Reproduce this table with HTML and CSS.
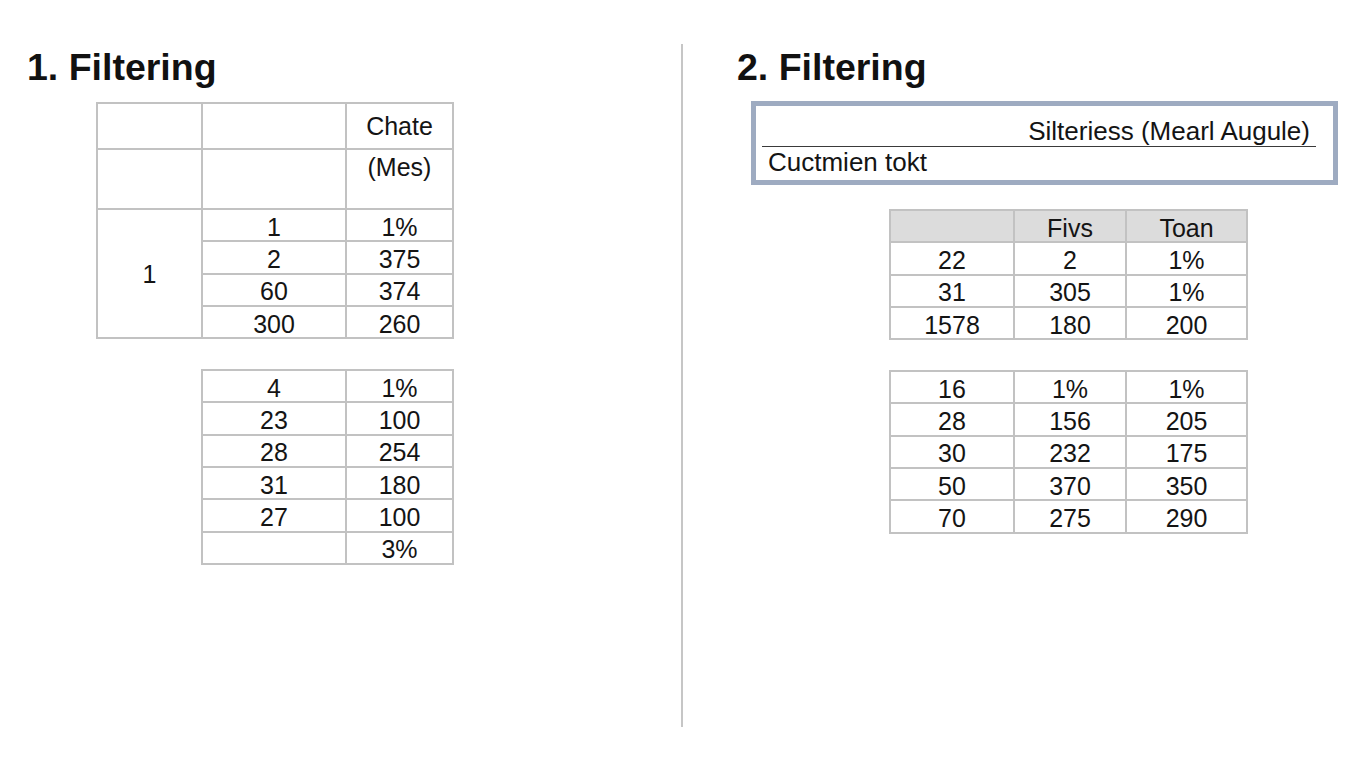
FILE: index.html
```html
<!DOCTYPE html>
<html lang="en">
<head>
<meta charset="utf-8">
<title>Filtering</title>
<link rel="stylesheet" href="styles.css">
</head>
<body>
<div class="page">
  <section class="panel panel-left">
    <h1 class="title">1. Filtering</h1>
    <table class="grid grid-a">
      <colgroup><col class="w105"><col class="w144"><col class="w107"></colgroup>
      <tr class="h46"><td></td><td></td><td>Chate</td></tr>
      <tr class="h60"><td></td><td></td><td class="top">(Mes)</td></tr>
      <tr><td class="span" rowspan="4">1</td><td>1</td><td>1%</td></tr>
      <tr><td>2</td><td>375</td></tr>
      <tr><td>60</td><td>374</td></tr>
      <tr><td>300</td><td>260</td></tr>
    </table>
    <table class="grid grid-b">
      <colgroup><col class="w144"><col class="w107"></colgroup>
      <tr><td>4</td><td>1%</td></tr>
      <tr><td>23</td><td>100</td></tr>
      <tr><td>28</td><td>254</td></tr>
      <tr><td>31</td><td>180</td></tr>
      <tr><td>27</td><td>100</td></tr>
      <tr><td></td><td>3%</td></tr>
    </table>
  </section>
  <div class="divider"></div>
  <section class="panel panel-right">
    <h1 class="title">2. Filtering</h1>
    <div class="filter-box">
      <div class="filter-head">Silteriess (Mearl Augule)</div>
      <div class="filter-text">Cuctmien tokt</div>
    </div>
    <table class="grid grid-c">
      <colgroup><col class="w124"><col class="w112"><col class="w121"></colgroup>
      <tr class="head"><td></td><td>Fivs</td><td>Toan</td></tr>
      <tr><td>22</td><td>2</td><td>1%</td></tr>
      <tr><td>31</td><td>305</td><td>1%</td></tr>
      <tr><td>1578</td><td>180</td><td>200</td></tr>
    </table>
    <table class="grid grid-d">
      <colgroup><col class="w124"><col class="w112"><col class="w121"></colgroup>
      <tr><td>16</td><td>1%</td><td>1%</td></tr>
      <tr><td>28</td><td>156</td><td>205</td></tr>
      <tr><td>30</td><td>232</td><td>175</td></tr>
      <tr><td>50</td><td>370</td><td>350</td></tr>
      <tr><td>70</td><td>275</td><td>290</td></tr>
    </table>
  </section>
</div>
</body>
</html>
```
FILE: styles.css
```css
html, body {
  margin: 0;
  padding: 0;
  background: #ffffff;
}
body {
  font-family: "Liberation Sans", Arial, sans-serif;
  color: #141414;
}
.page {
  display: flex;
  align-items: flex-start;
  width: 1365px;
  height: 768px;
}
.panel-left {
  width: 681px;
  padding-left: 27px;
  box-sizing: border-box;
}
.panel-right {
  flex: 1;
  padding-left: 54px;
  box-sizing: border-box;
}
.divider {
  width: 2px;
  height: 683px;
  margin-top: 44px;
  background: #c6c6c6;
}
.title {
  margin: 45px 0 0 0;
  font-size: 37.5px;
  line-height: 44px;
  font-weight: 700;
  color: #111;
}
.grid {
  border-collapse: separate;
  border-spacing: 0;
  table-layout: fixed;
  border-top: 2px solid #c2c2c2;
  border-left: 2px solid #c2c2c2;
  font-size: 25px;
}
.grid td {
  border-right: 2px solid #c2c2c2;
  border-bottom: 2px solid #c2c2c2;
  padding: 3px 0 0 0;
  height: 32.3px;
  box-sizing: border-box;
  text-align: center;
  vertical-align: middle;
  line-height: 26px;
}
.grid td.span { padding-top: 0; }
.grid .h46 td { height: 46px; padding-top: 0; }
.grid .h60 td { height: 60px; }
.grid td.top { vertical-align: top; padding-top: 4px; }
.w105 { width: 105px; }
.w144 { width: 144px; }
.w107 { width: 107px; }
.w124 { width: 124px; }
.w112 { width: 112px; }
.w121 { width: 121px; }
.grid-a { width: 358px; margin: 13px 0 0 69px; }
.grid-b { width: 253px; margin: 30px 0 0 174px; }
.grid-c { width: 359px; margin: 24px 0 0 152px; }
.grid-d { width: 359px; margin: 30px 0 0 152px; }
.grid-c .head td { background: #dcdcdc; }
.filter-box {
  margin: 12px 0 0 14px;
  width: 587px;
  height: 84px;
  box-sizing: border-box;
  border: 5px solid #9eabc1;
  padding: 10px 17px 0 6px;
}
.filter-head {
  font-size: 26px;
  line-height: 30px;
  text-align: right;
  padding-right: 6px;
  border-bottom: 1.5px solid #3a3a3a;
}
.filter-text {
  font-size: 26px;
  line-height: 30px;
  padding-left: 6px;
}
```
